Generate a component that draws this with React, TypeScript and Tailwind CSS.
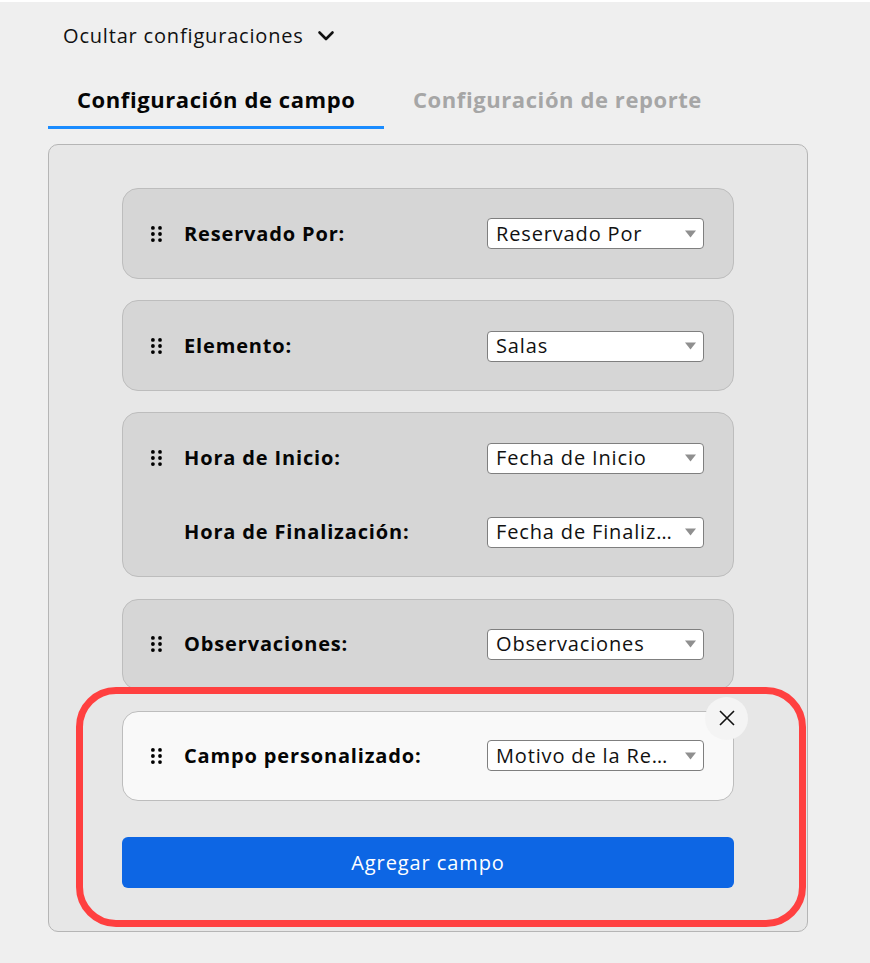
import React from "react";

const font = { fontFamily: '"Open Sans", sans-serif' };

function Dots() {
  return (
    <svg width="11" height="16" viewBox="0 0 11 16" className="shrink-0 ml-[1px]" fill="#000">
      {[1.9, 8, 14.1].map((y) => (
        <g key={y}>
          <circle cx="1.9" cy={y} r="1.9" />
          <circle cx="9" cy={y} r="1.9" />
        </g>
      ))}
    </svg>
  );
}

function Select({ value }: { value: string }) {
  return (
    <div className="w-[217px] h-[31px] shrink-0 bg-white border border-[#7f7f7f] rounded-[4px] flex items-center pl-[8px] pr-[7px]">
      <span className="flex-1 text-[20px] leading-[28px] tracking-[0.85px] text-[#111] whitespace-nowrap overflow-hidden">{value}</span>
      <svg width="11" height="8" viewBox="0 0 11 8" className="shrink-0">
        <path d="M0 0.5H11L5.5 7.5Z" fill="#8f8f8f" />
      </svg>
    </div>
  );
}

function Row({ label, value, dots = true }: { label: string; value: string; dots?: boolean }) {
  return (
    <div className="flex items-center h-[31px]">
      <div className="w-[34px] flex justify-start">{dots && <Dots />}</div>
      <span className="flex-1 text-[20px] leading-[28px] font-bold tracking-[0.85px] text-[#050505] whitespace-nowrap">{label}</span>
      <Select value={value} />
    </div>
  );
}

function Card({ children, className = "" }: { children: React.ReactNode; className?: string }) {
  return (
    <div className={`relative border border-[#bdbdbd] rounded-[16px] pl-[27px] pr-[29px] flex flex-col gap-[43px] ${className}`}>
      {children}
    </div>
  );
}

export default function App() {
  return (
    <div style={font} className="w-[870px] h-[963px] bg-white pt-[2px] overflow-hidden">
      <div className="h-[961px] bg-[#efefef] pl-[48px] pr-[62px]">
        <div className="flex items-center gap-[13px] pl-[15px] pt-[18px] h-[32px] box-content">
          <span className="text-[20px] leading-[28px] tracking-[0.82px] text-[#111]">Ocultar configuraciones</span>
          <svg width="18" height="12" viewBox="0 0 18 12" fill="none" stroke="#111" strokeWidth="2.6" strokeLinecap="round" strokeLinejoin="round">
            <path d="M2.5 2.5L9 9L15.5 2.5" />
          </svg>
        </div>
        <div className="flex mt-[30px] h-[47px]">
          <div className="w-[336px] h-[47px] border-b-[3px] border-[#1a8cff] pl-[29px] pt-[1px] text-[22px] leading-[32px] font-bold text-[#050505] tracking-[0.58px]">
            Configuración de campo
          </div>
          <div className="pl-[29px] pt-[1px] text-[22px] leading-[32px] font-bold text-[#a6a6a6] tracking-[0.58px]">
            Configuración de reporte
          </div>
        </div>
        <div className="relative mt-[15px] h-[788px] border border-[#b5b5b5] rounded-[10px] bg-[#e7e7e7] pl-[73px] pr-[73px] pt-[43px]">
          <div className="flex flex-col gap-[21.2px]">
            <Card className="bg-[#d6d6d6] pt-[29.4px] pb-[28.6px]">
              <Row label="Reservado Por:" value="Reservado Por" />
            </Card>
            <Card className="bg-[#d6d6d6] pt-[29.4px] pb-[28.6px]">
              <Row label="Elemento:" value="Salas" />
            </Card>
            <Card className="bg-[#d6d6d6] pt-[29.4px] pb-[28.6px]">
              <Row label="Hora de Inicio:" value="Fecha de Inicio" />
              <Row label="Hora de Finalización:" value="Fecha de Finaliz…" dots={false} />
            </Card>
            <Card className="bg-[#d6d6d6] pt-[29.4px] pb-[28.6px]">
              <Row label="Observaciones:" value="Observaciones" />
            </Card>
            <Card className="bg-[#f9f9f9] pt-[28.6px] pb-[28.8px]">
              <Row label="Campo personalizado:" value="Motivo de la Re…" />
              <div className="absolute -top-[15px] -right-[15px] w-[43px] h-[43px] rounded-full bg-[#f4f4f4] flex items-center justify-center">
                <svg width="16" height="16" viewBox="0 0 16 16" fill="none" stroke="#111" strokeWidth="1.6">
                  <path d="M1 1L15 15M15 1L1 15" />
                </svg>
              </div>
            </Card>
          </div>
          <button className="mt-[36.2px] w-full h-[51px] bg-[#0d66e4] rounded-[6px] text-white text-[20px] leading-[28px] tracking-[0.9px]">
            Agregar campo
          </button>
          <div className="absolute left-[27px] top-[542px] w-[730px] h-[240px] border-[7px] border-[#ff4040] rounded-[40px] pointer-events-none" />
        </div>
      </div>
    </div>
  );
}
